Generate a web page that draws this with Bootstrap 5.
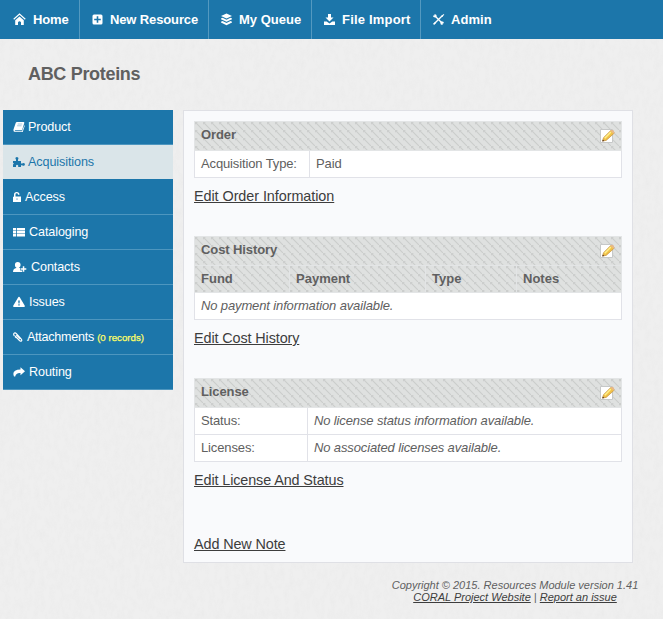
<!DOCTYPE html>
<html lang="en">
<head>
<meta charset="utf-8">
<meta name="viewport" content="width=device-width, initial-scale=1">
<title>ABC Proteins</title>
<link rel="stylesheet" href="https://cdn.jsdelivr.net/npm/bootstrap@5.3.0/dist/css/bootstrap.min.css">
<style>
  body { font: 13px/16px "Liberation Sans", Arial, sans-serif; letter-spacing: -.13px; color: #606060; height: 619px; overflow: hidden;
    background: #efefef url("data:image/svg+xml,%3Csvg xmlns='http://www.w3.org/2000/svg' width='400' height='400'%3E%3Cfilter id='n' x='0' y='0' width='100%25' height='100%25'%3E%3CfeTurbulence type='fractalNoise' baseFrequency='.2 .1' numOctaves='3' stitchTiles='stitch'/%3E%3CfeColorMatrix values='0 0 0 0 .5 0 0 0 0 .5 0 0 0 0 .5 .14 0 0 0 -.055'/%3E%3C/filter%3E%3Crect width='400' height='400' filter='url(%23n)'/%3E%3C/svg%3E"); }
  a { color: #3d3d3d; }
  svg { fill: currentColor; flex: none; display: block; }
  .topbar { height: 39px; background: #1c76aa; }
  .topbar a { color: #fff; font-weight: 700; height: 39px; padding-left: 11px; border-right: 1px solid #5499c0; white-space: nowrap; }
  .topbar a:last-child { border: 0; }
  .topbar svg { width: 13px; height: 13px; margin-right: 6px; }
  .topbar .t-home { width: 80px; padding-left: 13px; }
  .topbar .t-home svg { margin-right: 7px; }
  .t-new { width: 129px; }
  .t-queue { width: 103px; letter-spacing: 0; }
  .t-import { width: 109px; letter-spacing: .19px; }
  .t-admin { letter-spacing: .05px; }
  .topbar .t-admin svg { margin-right: 6px; }
  h1 { font-size: 18px; letter-spacing: -.32px; line-height: 20px; font-weight: 700; margin: 25px 0 26px 28px; }
  .side { width: 170px; margin-left: 3px; }
  .side a { height: 35px; padding: 0 0 1px 10px; background: #1c76aa; color: #fff; border-bottom: 1px solid #4d96bf; font-size: 12.6px; letter-spacing: -.1px; white-space: pre; }
  .side a.current { background: #dae5e9; color: #1c76aa; border-bottom-color: #1c76aa; }
  .side svg { height: 12px; margin-right: 4px; }
  .side a:nth-child(-n+3) svg { margin-right: 3px; }
  .side .s-files { letter-spacing: -.28px; }
  .records { color: #ffff66; font-size: 9.7px; padding-top: 2px; letter-spacing: 0; -webkit-text-stroke: .25px #ffff66; }
  .panel { width: 450px; height: 453px; margin-left: 10px; padding: 10px; border: 1px solid #dfe0e5; background: #f9fafc; }
  .grid { width: 428px; margin: 0; table-layout: fixed; border-collapse: collapse; color: inherit; background: #fff; }
  .grid th, .grid td { border: 1px solid #e1e2e8; padding: 0 6px 1px; height: 27px; line-height: 16px; vertical-align: middle; }
  .grid th { letter-spacing: 0; border-color: #e3e5e6; background: #dfe1e0 url("data:image/svg+xml,%3Csvg xmlns='http://www.w3.org/2000/svg' width='8' height='8'%3E%3Cpath d='M-1-1l10 10M7-1l2 2M-1 7l2 2' stroke='%23cbcecc' stroke-width='1.2'/%3E%3C/svg%3E"); }
  .grid tr:first-child th { height: 29px; padding-bottom: 2px; letter-spacing: -.1px; }
  .grid svg { width: 16px; height: 16px; margin: 2px 0 0 0; }
  .c-order { width: 115px; } .c-fund { width: 95px; } .c-payment { width: 136px; } .c-type { width: 91px; } .c-license { width: 113px; }
  .action { font-size: 14.4px; letter-spacing: -.06px; line-height: 18px; margin-top: 9px; display: block; width: fit-content; }
  .action.tight { letter-spacing: -.11px; }
  .gap-block { margin-bottom: 31px; }
  .note-link { margin-top: 46px; }
  .foot { width: 260px; margin: 16px 0 0 385px; font-size: 11px; letter-spacing: 0; line-height: 12px; font-style: italic; text-align: center; }
</style>
<script src="https://cdn.jsdelivr.net/npm/bootstrap@5.3.0/dist/js/bootstrap.bundle.min.js"></script>
</head>
<body>
<svg class="d-none" aria-hidden="true">
  <symbol id="edit" viewBox="0 0 16 16">
    <path d="M1.500 1.500h12v13h-12z" fill="#fff" stroke="#c6c8c8"/>
    <path d="M3.700 13l.7-3.200 7.300-7.200q1.400-.8 2.600.6t.4 2.500L7.200 12.400z" fill="#f0c148" stroke="#b8873c" stroke-width=".6"/>
    <path d="M5.200 9.700l6.200-6.100 1 1-6.100 6.200z" fill="#fff08b"/>
    <path d="M11.500 2.800l3 3 1-1.200-.9-2.100-1.800-.8z" fill="#e8b98b"/>
    <path d="M3.200 13.500l.6-2 1.500 1.400z" fill="#563318"/>
  </symbol>
</svg>
<nav class="topbar d-flex">
  <a href="#" class="t-home d-flex align-items-center text-decoration-none"><svg viewBox="0 0 13 13"><path d="M.7 6.200L6.500 1l5.800 5.200" fill="none" stroke="currentColor" stroke-width="1.200"/><path d="M2.200 7.300l4.300-3.700 4.300 3.700V12H8V9.200q-1.500-2-3 0V12H2.200z"/></svg>Home</a>
  <a href="#" class="t-new d-flex align-items-center text-decoration-none"><svg viewBox="0 0 13 13"><path fill-rule="evenodd" d="M3 1.500h7q1.500 0 1.500 1.500v7q0 1.500-1.500 1.500H3Q1.500 11.500 1.500 10V3Q1.500 1.500 3 1.500zM5.700 3.200v2.500H3.200v1.600h2.500v2.500h1.600V7.300h2.500V5.700H7.300V3.200z"/></svg>New Resource</a>
  <a href="#" class="t-queue d-flex align-items-center text-decoration-none"><svg viewBox="0 0 13 13"><path d="M6.500.5L12 3 6.500 5.500 1 3zM1 5.400l1.500-.6 4 1.900 4-1.900 1.500.6v.8L6.500 8.800 1 6.200zM1 8.700l1.500-.6 4 1.900 4-1.900 1.500.6v.8l-5.500 2.700L1 9.500z"/></svg>My Queue</a>
  <a href="#" class="t-import d-flex align-items-center text-decoration-none"><svg viewBox="0 0 13 13"><path d="M5 1h3v3.500h2.500l-4 4-4-4H5zM1 8.500h2.700l2.800 2 2.800-2H12V12H1z"/></svg>File Import</a>
  <a href="#" class="t-admin d-flex align-items-center text-decoration-none"><svg viewBox="0 0 13 13"><path d="M2.500 2.500l8 8M10.800 2.200L2.200 10.800" fill="none" stroke="currentColor" stroke-width="1.300"/><path d="M.9 2.500l1.700.2L2.500.900Q4.800 1 4.800 3.200L3.500 4.500Q.9 4.700.9 2.500zM8.200 9.500l1.300-1.300q2.300 0 2.600 2.100l-1.600-.1.100 1.800Q8.200 12 8.200 9.500zM9.300 3l2.500-2 .5.500-2 2.600zM1 10.700l2.500-1.900.8.900-2.200 2.400z"/></svg>Admin</a>
</nav>
<h1>ABC Proteins</h1>
<main class="d-flex align-items-start">
  <nav class="side d-flex flex-column">
    <a href="#" class="d-flex align-items-center text-decoration-none"><svg viewBox="0 0 12 12" width="12"><path d="M4 1h6.500q1 0 .8.900L9 9.200H2.200q-1 1 .2 1H9l2.400-6 .4.500L9.700 11H2Q0 10.800.4 8.700L2.700 2Q3.100 1 4 1z"/><path d="M4.700 3h4.500M4.100 4.800h4.500" stroke="#82b2d0" stroke-width=".7"/></svg>Product</a>
    <a href="#" class="current d-flex align-items-center text-decoration-none"><svg viewBox="0 0 12 12" width="12"><path d="M0 5h3V3.400Q2 2.500 2.700 1.500q1.200-1.200 2.400 0Q5.800 2.500 5 3.400V5h3v2.500h1.200q1-1 2.200-.2 1 1.200 0 2.200-1.200.8-2.200-.2H8V11H5.200V9.500Q4 7.900 3 9.500V11H0V8.500l1-.9L0 7z"/></svg>Acquisitions</a>
    <a href="#" class="d-flex align-items-center text-decoration-none"><svg viewBox="0 0 9 12" width="9"><path d="M1 6V3.700Q1 1 3.700 1t2.800 2.700H5Q5 2.300 3.700 2.300T2.500 3.700V5.500H8V11H0V5.500z"/><path d="M4 7.200v1.800" stroke="#7fb0cf"/></svg>Access</a>
    <a href="#" class="d-flex align-items-center text-decoration-none"><svg viewBox="0 0 12 12" width="12"><path d="M0 2h3.200v2.400H0zM4 2h8v2.400H4zM0 5h3.200v2.400H0zM4 5h8v2.400H4zM0 8h3.200v2.500H0zM4 8h8v2.500H4z"/></svg>Cataloging</a>
    <a href="#" class="d-flex align-items-center text-decoration-none"><svg viewBox="0 0 14 12" width="14"><path d="M4.700 1Q7.600 1 7.600 4 7.300 6 6.200 6.500v.5H7.200v2.500h2V11H0Q0 7.500 3.300 7v-.5Q1.900 6 1.900 4 1.900 1 4.700 1zM9.800 5.300h1.500v2h2V8.800h-2v2H9.800v-2h-2V7.300h2z"/></svg>Contacts</a>
    <a href="#" class="d-flex align-items-center text-decoration-none"><svg viewBox="0 0 12 12" width="12"><path fill-rule="evenodd" d="M6 .8q.6 0 .9.600l4.900 8.400q.4 1.200-.8 1.200H1Q-.2 11 .2 9.800l4.900-8.400Q5.400.8 6 .8zM5.200 4.500l.3 3h1l.3-3zM5.300 8.300v1.300h1.400V8.300z"/></svg>Issues</a>
    <a href="#" class="s-files d-flex align-items-center text-decoration-none"><svg viewBox="0 0 10 12" width="10"><path d="M2 4.800l4.500 4.700q1.300 1.200 2 .4t-.4-2L3.400 2.600Q1.900 1.200 1 2.300T1.500 5M3.200 3.900l4 4M2 5.500L3.400 6.900" fill="none" stroke="currentColor" stroke-width="1.200"/></svg>Attachments <span class="records">(0 records)</span></a>
    <a href="#" class="d-flex align-items-center text-decoration-none"><svg viewBox="0 0 12 12" width="12"><path d="M7.500 1.200L12 5.300l-4.500 4V7Q3 6.600 2.200 10.500H1Q-1.800 3.700 7.500 3.500z"/></svg>Routing</a>
  </nav>
  <section class="panel">
    <table class="grid">
      <colgroup><col class="c-order"><col></colgroup>
      <tr><th colspan="2"><div class="d-flex justify-content-between align-items-center">Order<svg><use href="#edit"/></svg></div></th></tr>
      <tr><td>Acquisition Type:</td><td>Paid</td></tr>
    </table>
    <a href="#" class="action gap-block">Edit Order Information</a>
    <table class="grid">
      <colgroup><col class="c-fund"><col class="c-payment"><col class="c-type"><col></colgroup>
      <tr><th colspan="4"><div class="d-flex justify-content-between align-items-center">Cost History<svg><use href="#edit"/></svg></div></th></tr>
      <tr><th>Fund</th><th>Payment</th><th>Type</th><th>Notes</th></tr>
      <tr><td colspan="4"><i>No payment information available.</i></td></tr>
    </table>
    <a href="#" class="action tight gap-block">Edit Cost History</a>
    <table class="grid">
      <colgroup><col class="c-license"><col></colgroup>
      <tr><th colspan="2"><div class="d-flex justify-content-between align-items-center">License<svg><use href="#edit"/></svg></div></th></tr>
      <tr><td>Status:</td><td><i>No license status information available.</i></td></tr>
      <tr><td>Licenses:</td><td><i>No associated licenses available.</i></td></tr>
    </table>
    <a href="#" class="action tight">Edit License And Status</a>
    <a href="#" class="action tight note-link">Add New Note</a>
  </section>
</main>
<footer class="foot">Copyright © 2015. Resources Module version 1.41<br><a href="#">CORAL Project Website</a> | <a href="#">Report an issue</a></footer>
</body>
</html>
